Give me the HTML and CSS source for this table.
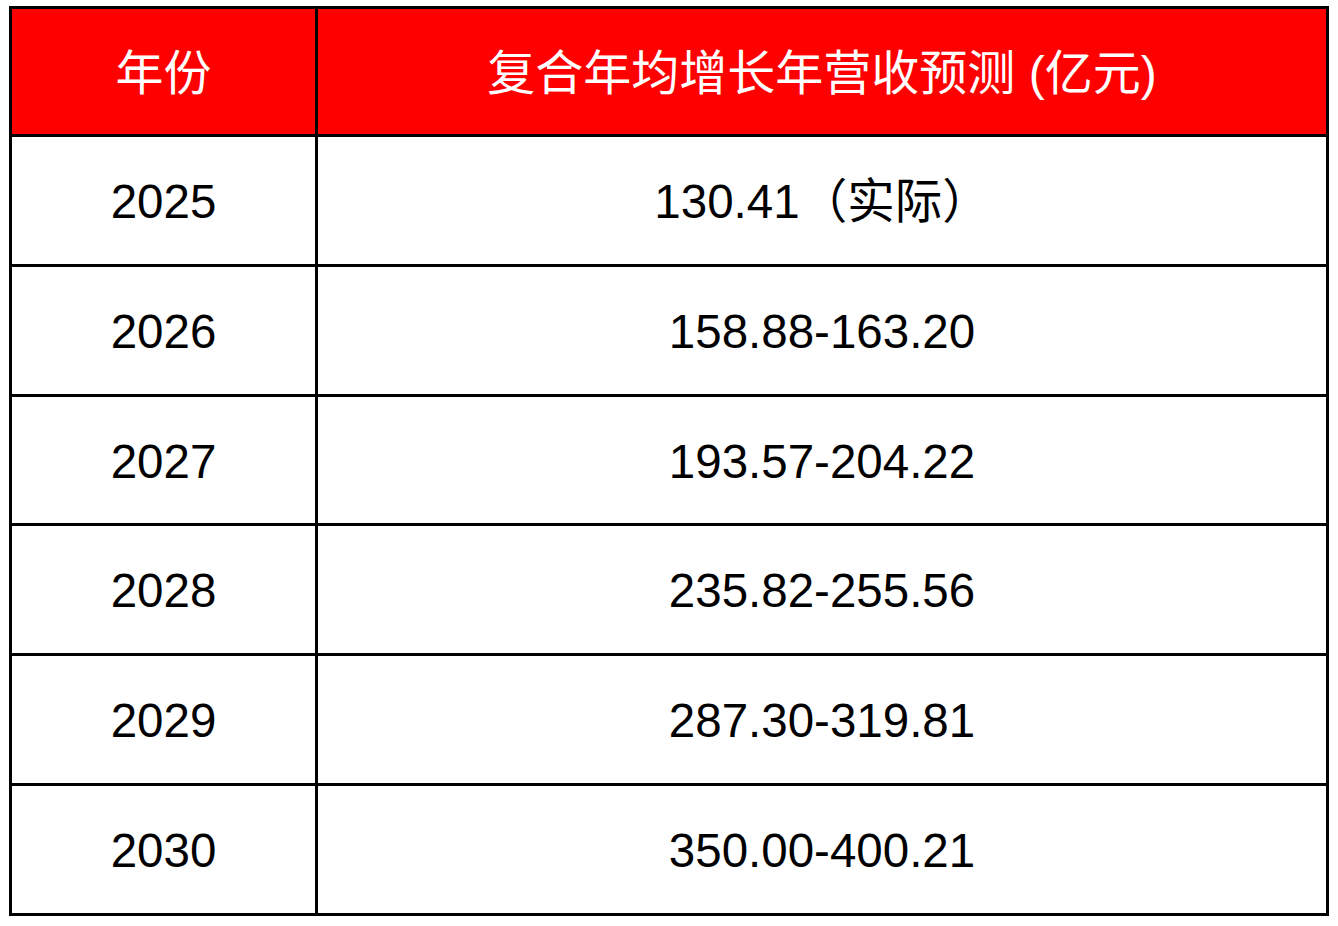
FILE: index.html
```html
<!DOCTYPE html>
<html lang="zh-CN">
<head>
<meta charset="utf-8">
<title>复合年均增长年营收预测</title>
<link rel="stylesheet" href="styles.css">
</head>
<body>
<table class="forecast">
  <colgroup>
    <col class="col-year">
    <col class="col-value">
  </colgroup>
  <thead>
    <tr class="head-row">
      <th>年份</th>
      <th>复合年均增长年营收预测 (亿元)</th>
    </tr>
  </thead>
  <tbody>
    <tr><td>2025</td><td>130.41（实际）</td></tr>
    <tr><td>2026</td><td>158.88-163.20</td></tr>
    <tr><td>2027</td><td>193.57-204.22</td></tr>
    <tr><td>2028</td><td>235.82-255.56</td></tr>
    <tr><td>2029</td><td>287.30-319.81</td></tr>
    <tr><td>2030</td><td>350.00-400.21</td></tr>
  </tbody>
</table>
</body>
</html>
```
FILE: styles.css
```css
html, body {
  margin: 0;
  padding: 0;
  background: #ffffff;
}

body {
  padding: 6px 0 0 9px;
  font-family: "Liberation Sans", "Noto Sans CJK SC", sans-serif;
}

.forecast {
  border-collapse: collapse;
  width: 1317px;
  table-layout: fixed;
  border: 3px solid #000;
}

.col-year {
  width: 306px;
}

.col-value {
  width: 1011px;
}

.forecast th,
.forecast td {
  border: 3px solid #000;
  padding: 0;
  text-align: center;
  vertical-align: middle;
  font-size: 48px;
  font-weight: normal;
  line-height: 1.15;
}

.forecast th {
  background: #ff0000;
  color: #ffffff;
  padding-top: 4px;
}

.forecast td {
  color: #000000;
  font-size: 47.5px;
  padding-top: 4px;
}

.head-row {
  height: 128px;
}

.forecast tbody tr {
  height: 129.75px;
}
```
